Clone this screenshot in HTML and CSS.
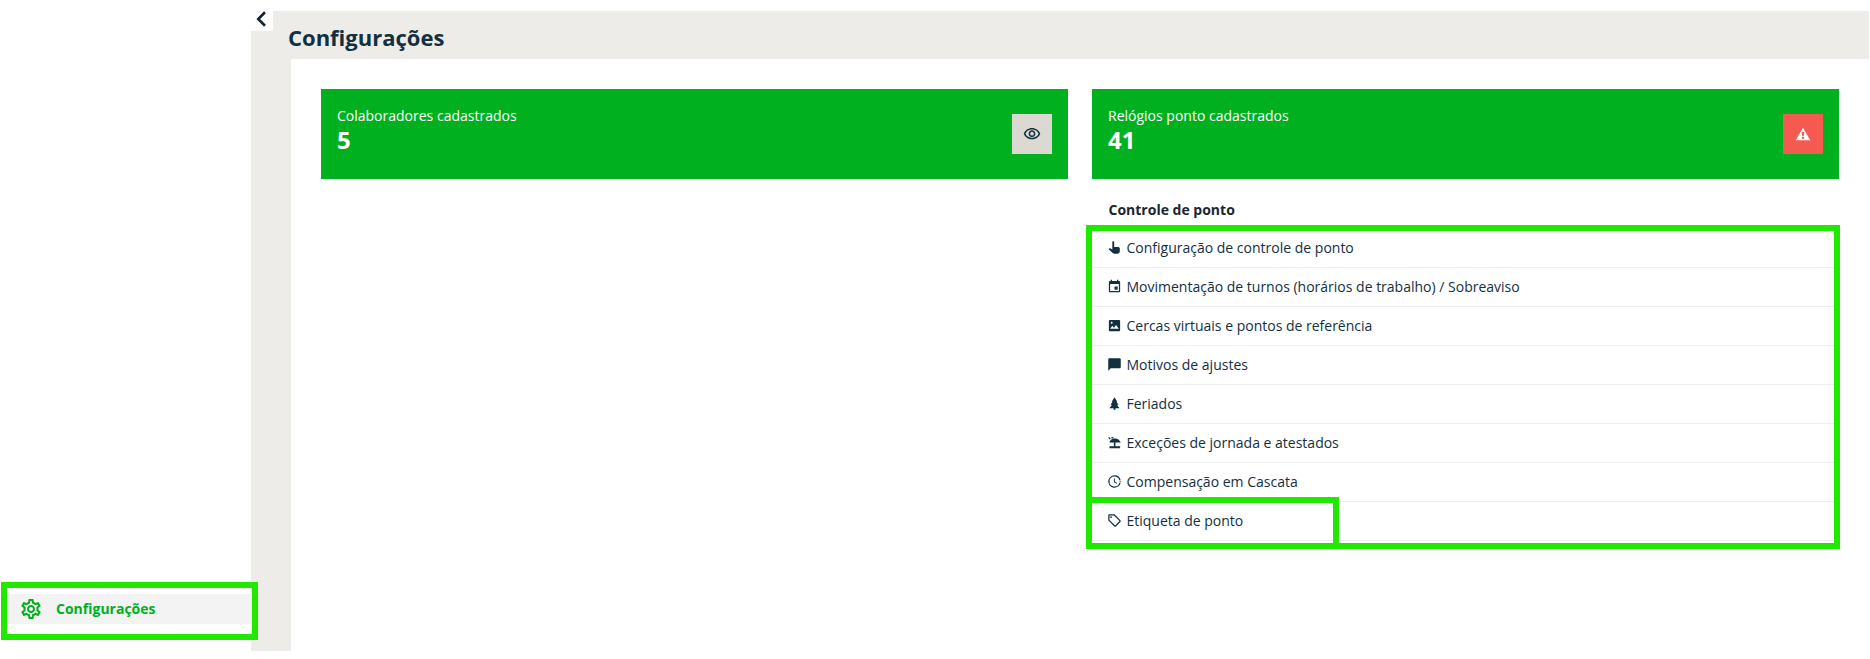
FILE: index.html
```html
<!DOCTYPE html>
<html lang="pt-BR">
<head>
<meta charset="utf-8">
<title>Configurações</title>
<link rel="stylesheet" href="styles.css">
</head>
<body>
<div class="app">
  <aside class="sidebar">
    <a class="side-item">
      <svg class="side-icon" viewBox="0 0 24 24"><path d="M19.43 12.98c.04-.32.07-.64.07-.98s-.03-.66-.07-.98l2.11-1.65c.19-.15.24-.42.12-.64l-2-3.46c-.12-.22-.39-.3-.61-.22l-2.49 1c-.52-.4-1.08-.73-1.69-.98l-.38-2.65C14.46 2.18 14.25 2 14 2h-4c-.25 0-.46.18-.49.42l-.38 2.65c-.61.25-1.17.59-1.69.98l-2.49-1c-.23-.09-.49 0-.61.22l-2 3.46c-.13.22-.07.49.12.64l2.11 1.65c-.04.32-.07.65-.07.98s.03.66.07.98l-2.11 1.65c-.19.15-.24.42-.12.64l2 3.46c.12.22.39.3.61.22l2.49-1c.52.4 1.08.73 1.69.98l.38 2.65c.03.24.24.42.49.42h4c.25 0 .46-.18.49-.42l.38-2.65c.61-.25 1.17-.59 1.69-.98l2.49 1c.23.09.49 0 .61-.22l2-3.46c.12-.22.07-.49-.12-.64l-2.11-1.65zM17.45 11.27c.04.31.05.52.05.73 0 .21-.02.43-.05.73l-.14 1.13.89.7 1.08.84-.7 1.21-1.27-.51-1.04-.42-.9.68c-.43.32-.84.56-1.25.73l-1.06.43-.16 1.13-.2 1.35h-1.4l-.19-1.35-.16-1.13-1.06-.43c-.43-.18-.83-.41-1.23-.71l-.91-.7-1.06.43-1.27.51-.7-1.21 1.08-.84.89-.7-.14-1.13c-.03-.31-.05-.54-.05-.74s.02-.43.05-.73l.14-1.13-.89-.7-1.08-.84.7-1.21 1.27.51 1.04.42.9-.68c.43-.32.84-.56 1.25-.73l1.06-.43.16-1.13.2-1.35h1.39l.19 1.35.16 1.13 1.06.43c.43.18.83.41 1.23.71l.91.7 1.06-.43 1.27-.51.7 1.21-1.07.85-.89.7.14 1.13zM12 8c-2.21 0-4 1.79-4 4s1.79 4 4 4 4-1.79 4-4-1.79-4-4-4zm0 6c-1.1 0-2-.9-2-2s.9-2 2-2 2 .9 2 2-.9 2-2 2z"/></svg>
      <span>Configurações</span>
    </a>
    <div class="mark mark-side"></div>
  </aside>
  <main class="main">
    <button class="toggle" aria-label="Recolher"><svg viewBox="0 0 24 24"><path d="M16 3 L7 12 L16 21" /></svg></button>
    <h1 class="title">Configurações</h1>
    <div class="panel">
      <section class="col">
        <div class="card">
          <div class="card-text"><span class="card-label">Colaboradores cadastrados</span><strong class="card-value">5</strong></div>
          <span class="card-btn btn-grey"><svg viewBox="0 0 24 24"><path d="M12 6a9.77 9.77 0 0 1 8.82 5.5A9.77 9.77 0 0 1 12 17a9.77 9.77 0 0 1-8.82-5.5A9.77 9.77 0 0 1 12 6m0-2C7 4 2.73 7.11 1 11.5 2.73 15.89 7 19 12 19s9.27-3.11 11-7.5C21.27 7.11 17 4 12 4zm0 5a2.5 2.5 0 0 1 0 5 2.5 2.5 0 0 1 0-5m0-2c-2.48 0-4.5 2.02-4.5 4.5S9.52 16 12 16s4.5-2.02 4.5-4.5S14.48 7 12 7z"/></svg></span>
        </div>
      </section>
      <section class="col col-right">
        <div class="card">
          <div class="card-text"><span class="card-label">Relógios ponto cadastrados</span><strong class="card-value">41</strong></div>
          <span class="card-btn btn-red"><svg viewBox="0 0 24 24"><path fill-rule="evenodd" d="M1 21.500h22L12 2.500zM13.700 19h-3.400v-3h3.400zM13.700 14.500h-3.400V9h3.400z"/></svg></span>
        </div>
        <h2 class="list-title">Controle de ponto</h2>
        <ul class="list">
          <li class="row"><svg viewBox="0 0 24 24"><path d="M8.5 3.5c0-.9.7-1.5 1.5-1.5s1.5.6 1.5 1.5V11h6.2c1.400 0 2.800 1.100 2.800 2.700V18c0 2.200-1.800 4-4 4h-4.500c-1.100 0-2.100-.4-2.900-1.200L2.500 14.700l1-1c.6-.6 1.500-.7 2.200-.3l2.800 1.600z"/></svg><span>Configuração de controle de ponto</span></li>
          <li class="row"><svg viewBox="0 0 24 24"><path d="M17 12h-5v5h5v-5zM16 1v2H8V1H6v2H5c-1.110 0-1.990.9-1.990 2L3 19c0 1.100.89 2 2 2h14c1.100 0 2-.9 2-2V5c0-1.100-.9-2-2-2h-1V1h-2zm3 18H5V8h14v11z"/></svg><span>Movimentação de turnos (horários de trabalho) / Sobreaviso</span></li>
          <li class="row"><svg viewBox="0 0 24 24"><path d="M3 5c0-1.100.9-2 2-2h14c1.100 0 2 .9 2 2v14c0 1.100-.9 2-2 2H5c-1.100 0-2-.9-2-2zm2 12h14l-4.500-6-3.500 4.500-2.500-3zM7.500 6A1.500 1.500 0 0 0 7.500 9 1.500 1.500 0 0 0 7.500 6z" fill-rule="evenodd"/></svg><span>Cercas virtuais e pontos de referência</span></li>
          <li class="row"><svg viewBox="0 0 24 24"><path d="M20 2H4c-1.100 0-2 .9-2 2v18l4-4h14c1.100 0 2-.9 2-2V4c0-1.100-.9-2-2-2z"/></svg><span>Motivos de ajustes</span></li>
          <li class="row"><svg viewBox="0 0 24 24"><path d="M12 2 7.500 9H9L5.500 14H8L4 19.500h6.500V22h3v-2.500H20L16 14h2.500L15 9h1.500z"/></svg><span>Feriados</span></li>
          <li class="row"><svg viewBox="0 0 24 24"><path d="M2 4.500 3.500 3 6 5.500 4.500 7zM7 3h3v2H7zM4 12c0-3 3.500-6.500 8.500-6.500S21 9 22 12zM11 12h2.500v6H11zM4 18h17v3H4z"/></svg><span>Exceções de jornada e atestados</span></li>
          <li class="row"><svg viewBox="0 0 24 24"><path d="M12 2a10 10 0 1 0 9.800 12h-2.050A8 8 0 1 1 12 4a8 8 0 0 1 7.750 6h2.050A10 10 0 0 0 12 2zm.5 5H11v6l4.500 2.700.75-1.230-3.750-2.220z"/><circle cx="21" cy="12" r="1"/></svg><span>Compensação em Cascata</span></li>
          <li class="row"><svg viewBox="0 0 24 24"><path d="M21.410 11.580l-9-9C12.050 2.220 11.550 2 11 2H4c-1.100 0-2 .9-2 2v7c0 .55.22 1.050.59 1.420l9 9c.36.36.86.58 1.410.58s1.050-.22 1.410-.59l7-7c.37-.36.59-.86.59-1.410s-.23-1.060-.59-1.420zM13 20.010 4 11V4h7v-.01l9 9-7 7.020z"/><circle cx="6.500" cy="6.500" r="1.500"/></svg><span>Etiqueta de ponto</span></li>
        </ul>
        <div class="mark mark-list"></div>
        <div class="mark mark-row"></div>
      </section>
    </div>
  </main>
</div>
</body>
</html>
```

FILE: styles.css
```css
* { box-sizing: border-box; }
html, body { margin: 0; padding: 0; background: #fff; }
body { font-family: "Open Sans", sans-serif; color: #12303f; }

.app { display: flex; height: 651px; position: relative; }

.sidebar {
  width: 251px;
  flex: none;
  display: flex;
  flex-direction: column;
  justify-content: flex-end;
  padding: 0 0 27px 7px;
}
.side-item {
  display: flex;
  align-items: center;
  gap: 13px;
  height: 30px;
  padding: 0 0 2px 12px;
  background: #f3f3f3;
  color: #00b01e;
  font-size: 14px;
  font-weight: 700;
}
.side-icon { width: 24px; height: 24px; margin-top: 2px; fill: #00b01e; flex: none; }

.main {
  flex: 1;
  margin: 11px 1px 0 0;
  background: #eeece8;
  display: flex;
  flex-direction: column;
  min-width: 0;
}
.toggle {
  position: absolute;
  left: 251px;
  top: 0;
  width: 22px;
  height: 31px;
  padding: 0;
  border: 0;
  background: #fff;
  border-radius: 0 0 2px 0;
  display: flex;
  align-items: flex-start;
  justify-content: center;
}
.toggle svg {
  width: 18px;
  height: 18px;
  margin-top: 10px;
  fill: none;
  stroke: #10202c;
  stroke-width: 3.4;
}
.title {
  margin: 0;
  height: 48px;
  padding: 11px 0 0 37px;
  font-size: 22px;
  line-height: 30px;
  font-weight: 700;
  color: #12303f;
}
.panel {
  flex: 1;
  margin-left: 40px;
  padding: 30px;
  background: #fff;
  display: grid;
  grid-template-columns: 747px 747px;
  column-gap: 24px;
  align-items: start;
}
.col { position: relative; min-width: 0; }

.card {
  height: 90px;
  background: #00b01e;
  color: #fff;
  display: flex;
  align-items: center;
  justify-content: space-between;
  padding: 0 16px;
}
.card-text { display: flex; flex-direction: column; padding-bottom: 8px; }
.card-label { font-size: 14px; line-height: 19px; }
.card-value { font-size: 24px; line-height: 30px; font-weight: 700; }
.card-btn {
  width: 40px;
  height: 40px;
  display: flex;
  align-items: center;
  justify-content: center;
}
.card-btn svg { width: 18px; height: 18px; }
.btn-grey { background: #dcd8d2; }
.btn-grey svg { fill: #12303f; }
.btn-red { background: #f55a50; }
.btn-red svg { width: 16px; height: 16px; fill: #fff; }

.list-title {
  margin: 0;
  height: 50px;
  padding: 21px 0 0 16.5px;
  font-size: 14px;
  line-height: 19px;
  font-weight: 700;
  color: #1c2530;
}
.list { margin: 0; padding: 0; list-style: none; }
.row {
  height: 39px;
  border-bottom: 1px solid #eeeeee;
  display: flex;
  align-items: center;
  gap: 4.5px;
  padding: 0 0 2px 15px;
  font-size: 14px;
  color: #12303f;
}
.row svg { width: 15px; height: 15px; fill: #12303f; flex: none; }

.mark {
  position: absolute;
  border: 6px solid #22e800;
  pointer-events: none;
}
.mark-side { left: 1px; top: 582px; width: 257px; height: 58px; }
.mark-list { left: -6px; top: 136px; width: 754px; height: 324px; }
.mark-row { left: -6px; top: 408px; width: 253px; height: 52px; }
```
